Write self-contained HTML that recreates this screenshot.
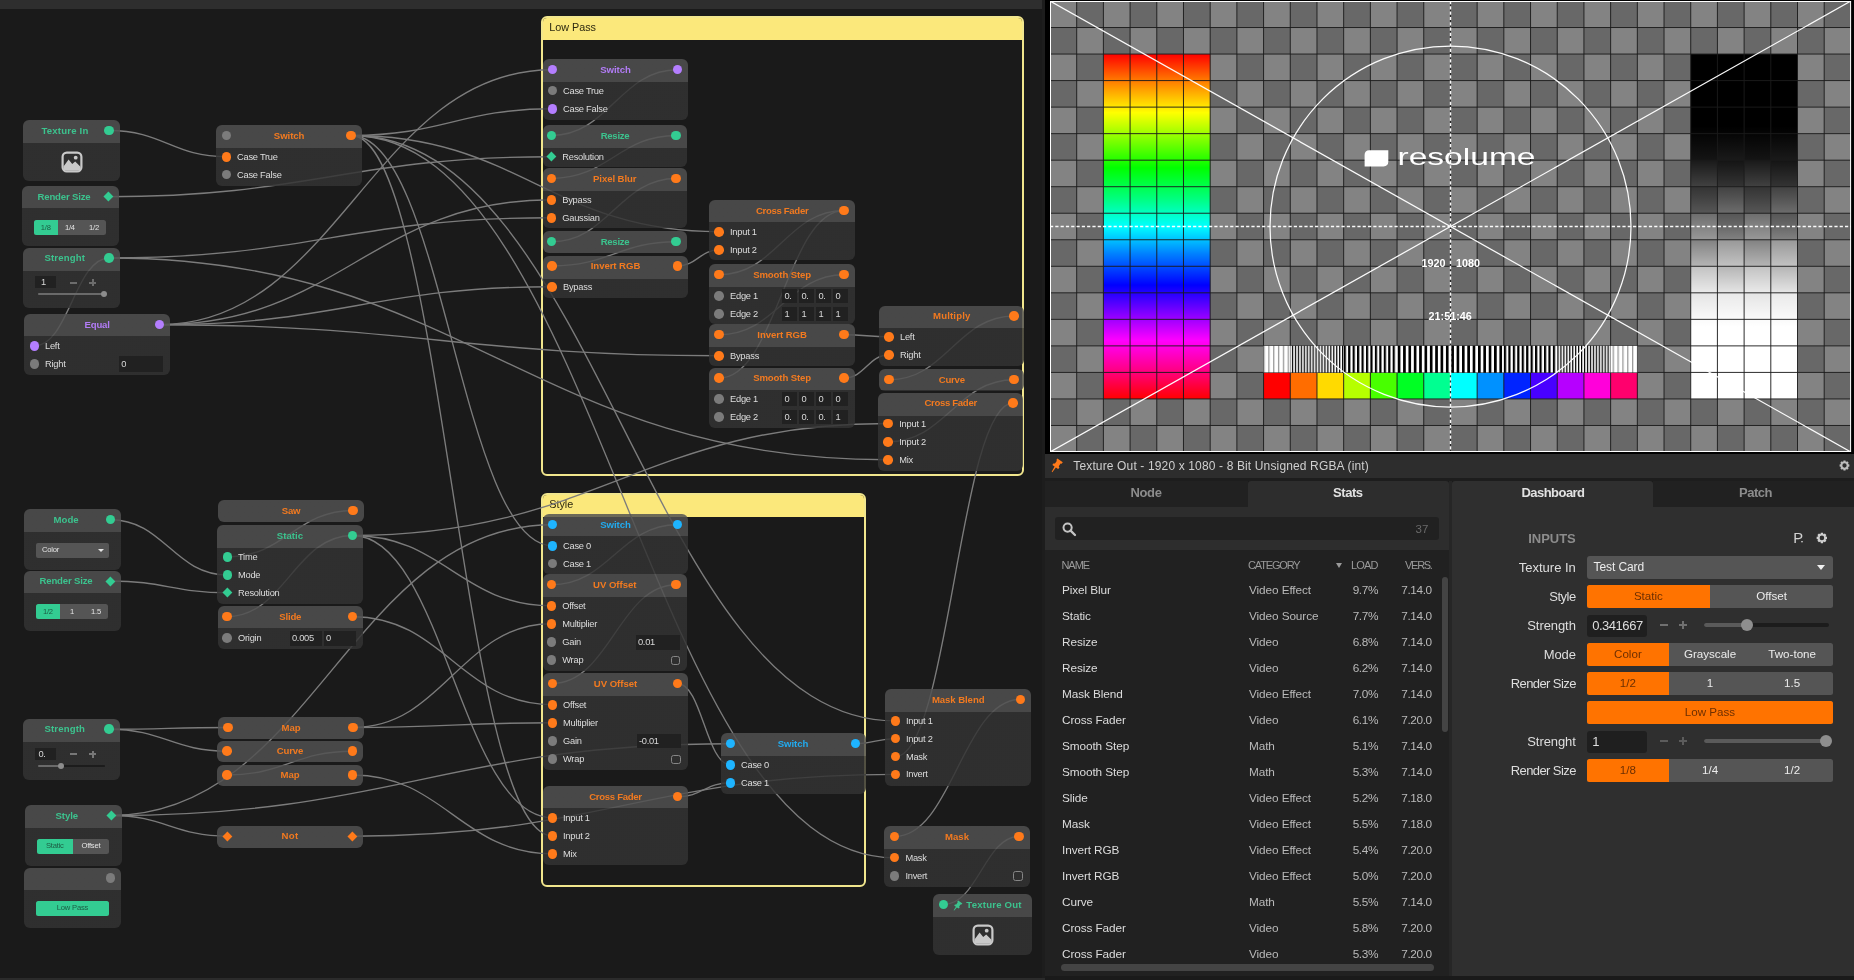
<!DOCTYPE html>
<html lang="en"><head><meta charset="utf-8"><title>Wire patch</title><style>
html,body{margin:0;padding:0}
#app{position:absolute;left:0;top:0;width:1854px;height:980px;overflow:hidden;will-change:transform}
body{width:1854px;height:980px;overflow:hidden;position:relative;background:#1a1a1a;font-family:"Liberation Sans",sans-serif;}
.a,.n,.t,.pt,.dm,.tri,.grp{position:absolute;display:block}
.n{background:linear-gradient(rgba(81,81,81,.84) var(--h),rgba(51,51,51,.84) var(--h));border-radius:6px}
.pt{width:9.6px;height:9.6px;border-radius:50%}
.dm{width:6.8px;height:6.8px;transform:rotate(45deg)}
.t{white-space:nowrap;height:16px;line-height:16px;font-size:9.3px;color:#dcdcdc}
.tc{width:200px;text-align:center}
.tr{width:200px;text-align:right}
.nt{font-weight:bold;font-size:9.6px}
.nl{font-size:9.3px;letter-spacing:-.24px;color:#dedede}
.nv{font-size:9.3px;letter-spacing:-.3px;color:#d8d8d8}
.sg{font-size:7.6px;letter-spacing:-.2px;color:#e4e4e4}
.tri{width:0;height:0;border-style:solid;border-color:#e6e6e6 transparent transparent transparent}
.grp{border:2px solid #f1e68d;border-radius:6px;box-sizing:border-box;overflow:hidden}
.grp b{display:block;background:#fbe87b;font-weight:normal;color:#2c2810;font-size:10.8px;padding-left:6.2px}
.tab{font-weight:bold;font-size:13px}
.hd{font-size:11px;color:#9a9a9a}
.rw{font-size:11.8px;letter-spacing:-.1px}
.rn{letter-spacing:-.38px}
.lb{font-size:13px;color:#dedede}
.ct{font-size:11.6px;color:#ececec}
.pt12{font-size:12px}
</style></head><body><div id="app">
<div class="a" style="left:0px;top:0px;width:1042px;height:9px;background:#2e2e2e;"></div>
<div class="a" style="left:0px;top:978.2px;width:1045px;height:1.8px;background:#2b2b2b;"></div>
<div class="a" style="left:1042px;top:0px;width:3px;height:977.7px;background:#1d1d1d;"></div>
<div class="grp" style="left:541px;top:16px;width:483.2px;height:460px"><b style="height:21.5px;line-height:19px">Low Pass</b></div>
<div class="grp" style="left:541px;top:493px;width:325px;height:394px"><b style="height:22px;line-height:19.5px">Style</b></div>
<svg class="a" style="left:0;top:0" width="1045" height="980" viewBox="0 0 1045 980" fill="none" stroke="#7c7c7c" stroke-width="1.35"><path d="M109.25 130.45C162.6 130.45 173.15 156.75 226.5 156.75"/><path d="M108.25 196.7C309.93 196.7 349.82 156.75 551.5 156.75"/><path d="M109.25 257.95C75.24 257.95 68.51 345.75 34.5 345.75"/><path d="M109.25 257.95C310.47 257.95 350.28 217.75 551.5 217.75"/><path d="M109.25 257.95C463.58 257.95 533.67 459.75 888 459.75"/><path d="M159.5 324.7C338.31 324.7 373.69 69.7 552.5 69.7"/><path d="M159.5 324.7C337.86 324.7 373.14 199.75 551.5 199.75"/><path d="M159.5 324.7C338.2 324.7 373.55 286.75 552.25 286.75"/><path d="M159.5 324.7C414.19 324.7 464.56 355.75 719.25 355.75"/><path d="M351.25 135.45C442.82 135.45 460.93 108.75 552.5 108.75"/><path d="M351.25 135.45C518.69 135.45 551.81 231.75 719.25 231.75"/><path d="M351.25 135.45C598.43 135.45 647.32 857.7 894.5 857.7"/><path d="M351.25 135.45C598.84 135.45 647.81 720.9 895.4 720.9"/><path d="M351.25 135.45C442.82 135.45 460.93 835.75 552.5 835.75"/><path d="M351.25 135.45C442.82 135.45 460.93 545.75 552.5 545.75"/><path d="M110.5 519.7C163.74 519.7 174.26 575 227.5 575"/><path d="M110.5 580.95C163.74 580.95 174.26 592.75 227.5 592.75"/><path d="M353.25 510.45C296.03 510.45 284.72 556.75 227.5 556.75"/><path d="M352.5 535.45C295.4 535.45 284.1 616.7 227 616.7"/><path d="M352.5 535.45C596.15 535.45 644.35 423.5 888 423.5"/><path d="M352.5 535.45C443.05 535.45 460.95 605.75 551.5 605.75"/><path d="M352.5 535.45C443.5 535.45 461.5 817.75 552.5 817.75"/><path d="M352.5 616.7C443.5 616.7 461.5 704.75 552.5 704.75"/><path d="M109.25 729.2C163.28 729.2 173.97 727.45 228 727.45"/><path d="M109.25 729.2C162.83 729.2 173.42 751.2 227 751.2"/><path d="M352.5 751.2C295.4 751.2 284.1 774.95 227 774.95"/><path d="M353.25 727.45C443.45 727.45 461.3 623.75 551.5 623.75"/><path d="M353.25 727.45C443.91 727.45 461.84 722.75 552.5 722.75"/><path d="M352.5 774.95C443.5 774.95 461.5 853.75 552.5 853.75"/><path d="M111.25 815.45C164.14 815.45 174.61 836.2 227.5 836.2"/><path d="M111.25 815.45C312.02 815.45 351.73 524.7 552.5 524.7"/><path d="M111.25 815.45C393.01 815.45 448.74 743.7 730.5 743.7"/><path d="M352.5 836.2C599.52 836.2 648.38 774.4 895.4 774.4"/><path d="M677.5 69.7C620.17 69.7 608.83 135.45 551.5 135.45"/><path d="M676.25 135.45C619.49 135.45 608.26 178.45 551.5 178.45"/><path d="M676.25 178.45C619.49 178.45 608.26 241.7 551.5 241.7"/><path d="M676.25 241.7C619.83 241.7 608.67 265.95 552.25 265.95"/><path d="M677.5 265.95C696.5 265.95 700.25 249.75 719.25 249.75"/><path d="M844.25 210.45C787.38 210.45 776.12 274.7 719.25 274.7"/><path d="M844.25 274.7C787.38 274.7 776.12 334.7 719.25 334.7"/><path d="M844.25 210.45C787.38 210.45 776.12 377.95 719.25 377.95"/><path d="M844.25 334.7C864.73 334.7 868.77 336.75 889.25 336.75"/><path d="M844.25 377.95C864.73 377.95 868.77 354.75 889.25 354.75"/><path d="M1014.25 315.95C957.38 315.95 946.12 379.7 889.25 379.7"/><path d="M1014.25 379.7C956.81 379.7 945.44 441.75 888 441.75"/><path d="M1013.25 402.95C959.63 402.95 949.02 756.6 895.4 756.6"/><path d="M677.5 524.7C620.17 524.7 608.83 584.7 551.5 584.7"/><path d="M676.25 584.7C619.94 584.7 608.81 683.45 552.5 683.45"/><path d="M677.5 683.45C701.62 683.45 706.38 764.75 730.5 764.75"/><path d="M677.5 796.7C701.62 796.7 706.38 782.75 730.5 782.75"/><path d="M855.5 743.7C873.65 743.7 877.25 738.6 895.4 738.6"/><path d="M1020.4 699.45C963.12 699.45 951.78 836.45 894.5 836.45"/><path d="M1019.2 836.45C984.71 836.45 977.89 904.55 943.4 904.55"/></svg>
<div class="n" style="left:23px;top:120px;width:97px;height:61px;--h:23px"></div>
<span class="t tc nt" style="left:-35px;top:122.65px;color:#3cc38e;letter-spacing:0.19px;font-size:9.6px;">Texture In</span>
<i class="pt" style="left:104.45px;top:125.65px;background:#33cc92"></i>
<svg class="a" style="left:60.5px;top:151px" width="22" height="22" viewBox="0 0 22 22"><rect x="1.6" y="1.6" width="18.8" height="18.8" rx="4.2" fill="none" stroke="#c9c9c9" stroke-width="2.2"/><path d="M2.5 15.5 L7.6 8.6 L11.2 13 L14.2 10.6 L19.5 15.8 V17 Q19.5 19.5 17 19.5 H5 Q2.5 19.5 2.5 17 Z" fill="#c9c9c9"/><circle cx="14.7" cy="6.7" r="1.9" fill="#c9c9c9"/></svg>
<div class="n" style="left:22px;top:186.25px;width:97px;height:59.5px;--h:22.5px"></div>
<span class="t tc nt" style="left:-36px;top:188.9px;color:#3cc38e;letter-spacing:-0.18px;font-size:9.6px;">Render Size</span>
<i class="dm" style="left:104.85px;top:193.3px;background:#33cc92"></i>
<div class="a" style="left:33.75px;top:220px;width:72.25px;height:15px;background:#555;border-radius:2.5px;"></div>
<div class="a" style="left:33.75px;top:220px;width:24.08px;height:15px;background:#33cc92;border-radius:2.5px 0 0 2.5px;"></div>
<span class="t tc sg" style="left:-54.21px;top:219.7px;color:#1d5c44;">1/8</span>
<span class="t tc sg" style="left:-30.12px;top:219.7px;">1/4</span>
<span class="t tc sg" style="left:-6.04px;top:219.7px;">1/2</span>
<div class="n" style="left:23px;top:247.5px;width:97px;height:60px;--h:22.5px"></div>
<span class="t tc nt" style="left:-35.25px;top:250.15px;color:#3cc38e;letter-spacing:0.13px;font-size:9.6px;">Strenght</span>
<i class="pt" style="left:104.45px;top:253.15px;background:#33cc92"></i>
<div class="a" style="left:35px;top:276.25px;width:21px;height:11.75px;background:#212121;"></div>
<span class="t nv" style="left:41px;top:274.32px;">1</span>
<div class="a" style="left:69.85px;top:281.5px;width:6.8px;height:2px;background:#6c6c6c;"></div>
<div class="a" style="left:89.1px;top:281.5px;width:6.8px;height:2px;background:#6c6c6c;"></div>
<div class="a" style="left:91.5px;top:279.1px;width:2px;height:6.8px;background:#6c6c6c;"></div>
<div class="a" style="left:37.5px;top:292.95px;width:66.25px;height:1.6px;background:#1c1c1c;border-radius:0.8px;"></div>
<div class="a" style="left:37.5px;top:292.95px;width:66.25px;height:1.6px;background:#6a6a6a;border-radius:0.8px;"></div>
<div class="a" style="left:100.75px;top:290.75px;width:6px;height:6px;background:#8c8c8c;border-radius:50%;"></div>
<div class="n" style="left:24.25px;top:314.25px;width:145.75px;height:60.25px;--h:22.5px"></div>
<span class="t tc nt" style="left:-2.88px;top:316.9px;color:#b27cf6;letter-spacing:-0.17px;font-size:9.6px;">Equal</span>
<i class="pt" style="left:154.7px;top:319.9px;background:#b47eff"></i>
<i class="pt" style="left:29.7px;top:340.95px;background:#b47eff"></i>
<span class="t nl" style="left:45px;top:337.75px;">Left</span>
<i class="pt" style="left:29.7px;top:358.95px;background:#7b7b7b"></i>
<span class="t nl" style="left:45px;top:355.75px;">Right</span>
<div class="a" style="left:118.75px;top:356.25px;width:44.25px;height:15.5px;background:#212121;"></div>
<span class="t nv" style="left:121.25px;top:356.2px;">0</span>
<div class="n" style="left:216.25px;top:125px;width:145.75px;height:61px;--h:22.5px"></div>
<span class="t tc nt" style="left:189.12px;top:127.65px;color:#f27a20;letter-spacing:-0.07px;font-size:9.6px;">Switch</span>
<i class="pt" style="left:221.7px;top:130.65px;background:#7b7b7b"></i>
<i class="pt" style="left:346.45px;top:130.65px;background:#ff7a1a"></i>
<i class="pt" style="left:221.7px;top:151.95px;background:#ff7a1a"></i>
<span class="t nl" style="left:237px;top:148.75px;">Case True</span>
<i class="pt" style="left:221.7px;top:169.7px;background:#7b7b7b"></i>
<span class="t nl" style="left:237px;top:166.5px;">Case False</span>
<div class="n" style="left:24.25px;top:509.25px;width:96.75px;height:60.25px;--h:22.5px"></div>
<span class="t tc nt" style="left:-33.9px;top:511.9px;color:#3cc38e;letter-spacing:0.06px;font-size:9.6px;">Mode</span>
<i class="pt" style="left:105.7px;top:514.9px;background:#33cc92"></i>
<div class="a" style="left:35.75px;top:543px;width:73.5px;height:15px;background:#555;border-radius:2px;"></div>
<span class="t sg" style="left:42px;top:542.2px;">Color</span>
<i class="tri" style="left:97.8px;top:548.9px;border-width:3.6px 3.2px 0 3.2px"></i>
<div class="n" style="left:24.25px;top:570.5px;width:96.75px;height:60px;--h:22px"></div>
<span class="t tc nt" style="left:-34px;top:573.15px;color:#3cc38e;letter-spacing:-0.18px;font-size:9.6px;">Render Size</span>
<i class="dm" style="left:107.1px;top:577.55px;background:#33cc92"></i>
<div class="a" style="left:35.75px;top:604.25px;width:72.25px;height:15px;background:#555;border-radius:2.5px;"></div>
<div class="a" style="left:35.75px;top:604.25px;width:24.25px;height:15px;background:#33cc92;border-radius:2.5px 0 0 2.5px;"></div>
<span class="t tc sg" style="left:-52.12px;top:603.95px;color:#1d5c44;">1/2</span>
<span class="t tc sg" style="left:-28px;top:603.95px;">1</span>
<span class="t tc sg" style="left:-4px;top:603.95px;">1.5</span>
<div class="n" style="left:218px;top:500px;width:146px;height:21.75px;--h:21.75px"></div>
<span class="t tc nt" style="left:191px;top:502.65px;color:#f27a20;letter-spacing:-0.3px;font-size:9.6px;">Saw</span>
<i class="pt" style="left:348.45px;top:505.65px;background:#ff7a1a"></i>
<div class="n" style="left:217px;top:525px;width:146px;height:78.75px;--h:23px"></div>
<span class="t tc nt" style="left:190px;top:527.65px;color:#3cc38e;letter-spacing:0.06px;font-size:9.6px;">Static</span>
<i class="pt" style="left:347.7px;top:530.65px;background:#33cc92"></i>
<i class="pt" style="left:222.7px;top:551.95px;background:#33cc92"></i>
<span class="t nl" style="left:238px;top:548.75px;">Time</span>
<i class="pt" style="left:222.7px;top:570.2px;background:#33cc92"></i>
<span class="t nl" style="left:238px;top:567px;">Mode</span>
<i class="dm" style="left:224.1px;top:589.35px;background:#33cc92"></i>
<span class="t nl" style="left:238px;top:584.75px;">Resolution</span>
<div class="n" style="left:217.5px;top:606.25px;width:145.5px;height:42.5px;--h:22.5px"></div>
<span class="t tc nt" style="left:190.25px;top:608.9px;color:#f27a20;letter-spacing:-0.19px;font-size:9.6px;">Slide</span>
<i class="pt" style="left:222.2px;top:611.9px;background:#ff7a1a"></i>
<i class="pt" style="left:347.7px;top:611.9px;background:#ff7a1a"></i>
<i class="pt" style="left:222.2px;top:632.95px;background:#7b7b7b"></i>
<span class="t nl" style="left:238px;top:629.75px;">Origin</span>
<div class="a" style="left:290px;top:630.75px;width:32px;height:14.75px;background:#212121;"></div>
<span class="t nv" style="left:292px;top:630.33px;">0.005</span>
<div class="a" style="left:324px;top:630.75px;width:32px;height:14.75px;background:#212121;"></div>
<span class="t nv" style="left:326px;top:630.33px;">0</span>
<div class="n" style="left:23px;top:718.75px;width:97px;height:61.25px;--h:22.5px"></div>
<span class="t tc nt" style="left:-35.25px;top:721.4px;color:#3cc38e;letter-spacing:0.13px;font-size:9.6px;">Strength</span>
<i class="pt" style="left:104.45px;top:724.4px;background:#33cc92"></i>
<div class="a" style="left:35px;top:748.25px;width:21px;height:11.75px;background:#212121;"></div>
<span class="t nv" style="left:38.5px;top:746.33px;">0.</span>
<div class="a" style="left:69.65px;top:753.25px;width:7.2px;height:2px;background:#777;"></div>
<div class="a" style="left:88.9px;top:753.25px;width:7.2px;height:2px;background:#777;"></div>
<div class="a" style="left:91.5px;top:750.65px;width:2px;height:7.2px;background:#777;"></div>
<div class="a" style="left:37.5px;top:765.2px;width:67.5px;height:1.6px;background:#1c1c1c;border-radius:0.8px;"></div>
<div class="a" style="left:37.5px;top:765.2px;width:23.5px;height:1.6px;background:#6a6a6a;border-radius:0.8px;"></div>
<div class="a" style="left:58px;top:763px;width:6px;height:6px;background:#8c8c8c;border-radius:50%;"></div>
<div class="n" style="left:218px;top:717px;width:146px;height:21.75px;--h:21.75px"></div>
<span class="t tc nt" style="left:191px;top:719.65px;color:#f27a20;letter-spacing:-0.07px;font-size:9.6px;">Map</span>
<i class="pt" style="left:223.2px;top:722.65px;background:#ff7a1a"></i>
<i class="pt" style="left:348.45px;top:722.65px;background:#ff7a1a"></i>
<div class="n" style="left:217px;top:740.75px;width:146px;height:21px;--h:21px"></div>
<span class="t tc nt" style="left:190px;top:743.4px;color:#f27a20;letter-spacing:-0.18px;font-size:9.6px;">Curve</span>
<i class="pt" style="left:222.2px;top:746.4px;background:#ff7a1a"></i>
<i class="pt" style="left:347.7px;top:746.4px;background:#ff7a1a"></i>
<div class="n" style="left:217px;top:764.5px;width:146px;height:21.25px;--h:21.25px"></div>
<span class="t tc nt" style="left:190px;top:767.15px;color:#f27a20;letter-spacing:-0.07px;font-size:9.6px;">Map</span>
<i class="pt" style="left:222.2px;top:770.15px;background:#ff7a1a"></i>
<i class="pt" style="left:347.7px;top:770.15px;background:#ff7a1a"></i>
<div class="n" style="left:25px;top:805px;width:97px;height:60.5px;--h:22.5px"></div>
<span class="t tc nt" style="left:-33.25px;top:807.65px;color:#3cc38e;letter-spacing:-0.09px;font-size:9.6px;">Style</span>
<i class="dm" style="left:107.85px;top:812.05px;background:#33cc92"></i>
<div class="a" style="left:36.75px;top:838.75px;width:72.25px;height:15px;background:#555;border-radius:2.5px;"></div>
<div class="a" style="left:36.75px;top:838.75px;width:36.12px;height:15px;background:#33cc92;border-radius:2.5px 0 0 2.5px;"></div>
<span class="t tc sg" style="left:-45.19px;top:838.45px;color:#1d5c44;">Static</span>
<span class="t tc sg" style="left:-9.06px;top:838.45px;">Offset</span>
<div class="n" style="left:217px;top:825.75px;width:146px;height:22px;--h:22px"></div>
<span class="t tc nt" style="left:190px;top:828.4px;color:#f27a20;letter-spacing:0.34px;font-size:9.6px;">Not</span>
<i class="dm" style="left:224.1px;top:832.8px;background:#ff7a1a"></i>
<i class="dm" style="left:349.1px;top:832.8px;background:#ff7a1a"></i>
<div class="n" style="left:24.25px;top:867.5px;width:96.75px;height:60px;--h:22.5px"></div>
<i class="pt" style="left:105.7px;top:873.15px;background:#7b7b7b"></i>
<div class="a" style="left:35.75px;top:900.75px;width:73.5px;height:15px;background:#555;border-radius:2.5px;"></div>
<div class="a" style="left:35.75px;top:900.75px;width:73.5px;height:15px;background:#33cc92;border-radius:2.5px;"></div>
<span class="t tc sg" style="left:-27.5px;top:900.45px;color:#1d5c44;">Low Pass</span>
<div class="n" style="left:543px;top:59.25px;width:145px;height:60.75px;--h:22.75px"></div>
<span class="t tc nt" style="left:515.5px;top:61.9px;color:#b27cf6;letter-spacing:-0.07px;font-size:9.6px;">Switch</span>
<i class="pt" style="left:547.7px;top:64.9px;background:#b47eff"></i>
<i class="pt" style="left:672.7px;top:64.9px;background:#b47eff"></i>
<i class="pt" style="left:547.7px;top:85.7px;background:#7b7b7b"></i>
<span class="t nl" style="left:563px;top:82.5px;">Case True</span>
<i class="pt" style="left:547.7px;top:103.95px;background:#b47eff"></i>
<span class="t nl" style="left:563px;top:100.75px;">Case False</span>
<div class="n" style="left:543px;top:125px;width:144px;height:42px;--h:22.75px"></div>
<span class="t tc nt" style="left:515px;top:127.65px;color:#3cc38e;letter-spacing:-0.32px;font-size:9.6px;">Resize</span>
<i class="pt" style="left:546.7px;top:130.65px;background:#33cc92"></i>
<i class="pt" style="left:671.45px;top:130.65px;background:#33cc92"></i>
<i class="dm" style="left:548.1px;top:153.35px;background:#33cc92"></i>
<span class="t nl" style="left:562.25px;top:148.75px;">Resolution</span>
<div class="n" style="left:542.5px;top:168px;width:144.5px;height:60px;--h:22.75px"></div>
<span class="t tc nt" style="left:514.75px;top:170.65px;color:#f27a20;letter-spacing:-0.08px;font-size:9.6px;">Pixel Blur</span>
<i class="pt" style="left:546.7px;top:173.65px;background:#ff7a1a"></i>
<i class="pt" style="left:671.45px;top:173.65px;background:#ff7a1a"></i>
<i class="pt" style="left:546.7px;top:194.95px;background:#ff7a1a"></i>
<span class="t nl" style="left:562.25px;top:191.75px;">Bypass</span>
<i class="pt" style="left:546.7px;top:212.95px;background:#ff7a1a"></i>
<span class="t nl" style="left:562.25px;top:209.75px;">Gaussian</span>
<div class="n" style="left:543px;top:231.25px;width:144px;height:21.75px;--h:21.75px"></div>
<span class="t tc nt" style="left:515px;top:233.9px;color:#3cc38e;letter-spacing:-0.32px;font-size:9.6px;">Resize</span>
<i class="pt" style="left:546.7px;top:236.9px;background:#33cc92"></i>
<i class="pt" style="left:671.45px;top:236.9px;background:#33cc92"></i>
<div class="n" style="left:543px;top:255.5px;width:145px;height:42px;--h:22.5px"></div>
<span class="t tc nt" style="left:515.5px;top:258.15px;color:#f27a20;letter-spacing:-0.06px;font-size:9.6px;">Invert RGB</span>
<i class="pt" style="left:547.45px;top:261.15px;background:#ff7a1a"></i>
<i class="pt" style="left:672.7px;top:261.15px;background:#ff7a1a"></i>
<i class="pt" style="left:547.45px;top:281.95px;background:#ff7a1a"></i>
<span class="t nl" style="left:563px;top:278.75px;">Bypass</span>
<div class="n" style="left:709.25px;top:200px;width:145.75px;height:60px;--h:22.5px"></div>
<span class="t tc nt" style="left:682.12px;top:202.65px;color:#f27a20;letter-spacing:-0.32px;font-size:9.6px;">Cross Fader</span>
<i class="pt" style="left:839.45px;top:205.65px;background:#ff7a1a"></i>
<i class="pt" style="left:714.45px;top:226.95px;background:#ff7a1a"></i>
<span class="t nl" style="left:730px;top:223.75px;">Input 1</span>
<i class="pt" style="left:714.45px;top:244.95px;background:#ff7a1a"></i>
<span class="t nl" style="left:730px;top:241.75px;">Input 2</span>
<div class="n" style="left:709.25px;top:264.25px;width:145.75px;height:59.5px;--h:22.5px"></div>
<span class="t tc nt" style="left:682.12px;top:266.9px;color:#f27a20;letter-spacing:-0.11px;font-size:9.6px;">Smooth Step</span>
<i class="pt" style="left:714.45px;top:269.9px;background:#ff7a1a"></i>
<i class="pt" style="left:839.45px;top:269.9px;background:#ff7a1a"></i>
<i class="pt" style="left:714.45px;top:290.95px;background:#7b7b7b"></i>
<span class="t nl" style="left:730px;top:287.75px;">Edge 1</span>
<i class="pt" style="left:714.45px;top:308.95px;background:#7b7b7b"></i>
<span class="t nl" style="left:730px;top:305.75px;">Edge 2</span>
<div class="a" style="left:782.25px;top:288.75px;width:14.75px;height:14.5px;background:#212121;"></div>
<span class="t nv" style="left:784.5px;top:288.2px;">0.</span>
<div class="a" style="left:799.25px;top:288.75px;width:14.75px;height:14.5px;background:#212121;"></div>
<span class="t nv" style="left:801.5px;top:288.2px;">0.</span>
<div class="a" style="left:816.25px;top:288.75px;width:14.75px;height:14.5px;background:#212121;"></div>
<span class="t nv" style="left:818.5px;top:288.2px;">0.</span>
<div class="a" style="left:833.25px;top:288.75px;width:14.75px;height:14.5px;background:#212121;"></div>
<span class="t nv" style="left:835.5px;top:288.2px;">0</span>
<div class="a" style="left:782.25px;top:306.75px;width:14.75px;height:14.5px;background:#212121;"></div>
<span class="t nv" style="left:784.5px;top:306.2px;">1</span>
<div class="a" style="left:799.25px;top:306.75px;width:14.75px;height:14.5px;background:#212121;"></div>
<span class="t nv" style="left:801.5px;top:306.2px;">1</span>
<div class="a" style="left:816.25px;top:306.75px;width:14.75px;height:14.5px;background:#212121;"></div>
<span class="t nv" style="left:818.5px;top:306.2px;">1</span>
<div class="a" style="left:833.25px;top:306.75px;width:14.75px;height:14.5px;background:#212121;"></div>
<span class="t nv" style="left:835.5px;top:306.2px;">1</span>
<div class="n" style="left:709.25px;top:324.25px;width:145.75px;height:42px;--h:22.75px"></div>
<span class="t tc nt" style="left:682.12px;top:326.9px;color:#f27a20;letter-spacing:-0.06px;font-size:9.6px;">Invert RGB</span>
<i class="pt" style="left:714.45px;top:329.9px;background:#ff7a1a"></i>
<i class="pt" style="left:839.45px;top:329.9px;background:#ff7a1a"></i>
<i class="pt" style="left:714.45px;top:350.95px;background:#ff7a1a"></i>
<span class="t nl" style="left:730px;top:347.75px;">Bypass</span>
<div class="n" style="left:709.25px;top:367.5px;width:145.75px;height:60px;--h:22.5px"></div>
<span class="t tc nt" style="left:682.12px;top:370.15px;color:#f27a20;letter-spacing:-0.11px;font-size:9.6px;">Smooth Step</span>
<i class="pt" style="left:714.45px;top:373.15px;background:#ff7a1a"></i>
<i class="pt" style="left:839.45px;top:373.15px;background:#ff7a1a"></i>
<i class="pt" style="left:714.45px;top:393.95px;background:#7b7b7b"></i>
<span class="t nl" style="left:730px;top:390.75px;">Edge 1</span>
<i class="pt" style="left:714.45px;top:411.95px;background:#7b7b7b"></i>
<span class="t nl" style="left:730px;top:408.75px;">Edge 2</span>
<div class="a" style="left:782.25px;top:391.75px;width:14.75px;height:14.5px;background:#212121;"></div>
<span class="t nv" style="left:784.5px;top:391.2px;">0</span>
<div class="a" style="left:799.25px;top:391.75px;width:14.75px;height:14.5px;background:#212121;"></div>
<span class="t nv" style="left:801.5px;top:391.2px;">0</span>
<div class="a" style="left:816.25px;top:391.75px;width:14.75px;height:14.5px;background:#212121;"></div>
<span class="t nv" style="left:818.5px;top:391.2px;">0</span>
<div class="a" style="left:833.25px;top:391.75px;width:14.75px;height:14.5px;background:#212121;"></div>
<span class="t nv" style="left:835.5px;top:391.2px;">0</span>
<div class="a" style="left:782.25px;top:409.75px;width:14.75px;height:14.5px;background:#212121;"></div>
<span class="t nv" style="left:784.5px;top:409.2px;">0.</span>
<div class="a" style="left:799.25px;top:409.75px;width:14.75px;height:14.5px;background:#212121;"></div>
<span class="t nv" style="left:801.5px;top:409.2px;">0.</span>
<div class="a" style="left:816.25px;top:409.75px;width:14.75px;height:14.5px;background:#212121;"></div>
<span class="t nv" style="left:818.5px;top:409.2px;">0.</span>
<div class="a" style="left:833.25px;top:409.75px;width:14.75px;height:14.5px;background:#212121;"></div>
<span class="t nv" style="left:835.5px;top:409.2px;">1</span>
<div class="n" style="left:879.25px;top:305.5px;width:145px;height:60.75px;--h:22px"></div>
<span class="t tc nt" style="left:851.75px;top:308.15px;color:#f27a20;letter-spacing:0.15px;font-size:9.6px;">Multiply</span>
<i class="pt" style="left:1009.45px;top:311.15px;background:#ff7a1a"></i>
<i class="pt" style="left:884.45px;top:331.95px;background:#ff7a1a"></i>
<span class="t nl" style="left:900px;top:328.75px;">Left</span>
<i class="pt" style="left:884.45px;top:349.95px;background:#ff7a1a"></i>
<span class="t nl" style="left:900px;top:346.75px;">Right</span>
<div class="n" style="left:879.25px;top:369.25px;width:145px;height:21.5px;--h:21.5px"></div>
<span class="t tc nt" style="left:851.75px;top:371.9px;color:#f27a20;letter-spacing:-0.24px;font-size:9.6px;">Curve</span>
<i class="pt" style="left:884.45px;top:374.9px;background:#ff7a1a"></i>
<i class="pt" style="left:1009.45px;top:374.9px;background:#ff7a1a"></i>
<div class="n" style="left:878px;top:392.5px;width:145.25px;height:78px;--h:22.5px"></div>
<span class="t tc nt" style="left:850.62px;top:395.15px;color:#f27a20;letter-spacing:-0.32px;font-size:9.6px;">Cross Fader</span>
<i class="pt" style="left:1008.45px;top:398.15px;background:#ff7a1a"></i>
<i class="pt" style="left:883.2px;top:418.7px;background:#ff7a1a"></i>
<span class="t nl" style="left:899.25px;top:415.5px;">Input 1</span>
<i class="pt" style="left:883.2px;top:436.95px;background:#ff7a1a"></i>
<span class="t nl" style="left:899.25px;top:433.75px;">Input 2</span>
<i class="pt" style="left:883.2px;top:454.95px;background:#ff7a1a"></i>
<span class="t nl" style="left:899.25px;top:451.75px;">Mix</span>
<div class="n" style="left:543px;top:514.25px;width:145px;height:59.5px;--h:22.5px"></div>
<span class="t tc nt" style="left:515.5px;top:516.9px;color:#22abef;letter-spacing:-0.07px;font-size:9.6px;">Switch</span>
<i class="pt" style="left:547.7px;top:519.9px;background:#1eb4ff"></i>
<i class="pt" style="left:672.7px;top:519.9px;background:#1eb4ff"></i>
<i class="pt" style="left:547.7px;top:540.95px;background:#1eb4ff"></i>
<span class="t nl" style="left:563px;top:537.75px;">Case 0</span>
<i class="pt" style="left:547.7px;top:558.7px;background:#7b7b7b"></i>
<span class="t nl" style="left:563px;top:555.5px;">Case 1</span>
<div class="n" style="left:542.5px;top:574.25px;width:144.5px;height:96.5px;--h:22.5px"></div>
<span class="t tc nt" style="left:514.75px;top:576.9px;color:#f27a20;letter-spacing:-0.03px;font-size:9.6px;">UV Offset</span>
<i class="pt" style="left:546.7px;top:579.9px;background:#ff7a1a"></i>
<i class="pt" style="left:671.45px;top:579.9px;background:#ff7a1a"></i>
<i class="pt" style="left:546.7px;top:600.95px;background:#ff7a1a"></i>
<span class="t nl" style="left:562.25px;top:597.75px;">Offset</span>
<i class="pt" style="left:546.7px;top:618.95px;background:#ff7a1a"></i>
<span class="t nl" style="left:562.25px;top:615.75px;">Multiplier</span>
<i class="pt" style="left:546.7px;top:636.95px;background:#7b7b7b"></i>
<span class="t nl" style="left:562.25px;top:633.75px;">Gain</span>
<i class="pt" style="left:546.7px;top:654.95px;background:#7b7b7b"></i>
<span class="t nl" style="left:562.25px;top:651.75px;">Wrap</span>
<div class="a" style="left:635.5px;top:635px;width:44.5px;height:14.5px;background:#212121;"></div>
<span class="t nv" style="left:638px;top:634.45px;">0.01</span>
<div class="a" style="left:670.5px;top:655.5px;width:9.5px;height:9.5px;border:1px solid #868686;border-radius:2.5px;box-sizing:border-box;"></div>
<div class="n" style="left:543px;top:673px;width:145px;height:96.5px;--h:22.75px"></div>
<span class="t tc nt" style="left:515.5px;top:675.65px;color:#f27a20;letter-spacing:-0.03px;font-size:9.6px;">UV Offset</span>
<i class="pt" style="left:547.7px;top:678.65px;background:#ff7a1a"></i>
<i class="pt" style="left:672.7px;top:678.65px;background:#ff7a1a"></i>
<i class="pt" style="left:547.7px;top:699.95px;background:#ff7a1a"></i>
<span class="t nl" style="left:563px;top:696.75px;">Offset</span>
<i class="pt" style="left:547.7px;top:717.95px;background:#ff7a1a"></i>
<span class="t nl" style="left:563px;top:714.75px;">Multiplier</span>
<i class="pt" style="left:547.7px;top:735.95px;background:#7b7b7b"></i>
<span class="t nl" style="left:563px;top:732.75px;">Gain</span>
<i class="pt" style="left:547.7px;top:753.95px;background:#7b7b7b"></i>
<span class="t nl" style="left:563px;top:750.75px;">Wrap</span>
<div class="a" style="left:637.25px;top:733.75px;width:43.75px;height:14.5px;background:#212121;"></div>
<span class="t nv" style="left:639px;top:733.2px;">-0.01</span>
<div class="a" style="left:671px;top:754.5px;width:9.5px;height:9.5px;border:1px solid #868686;border-radius:2.5px;box-sizing:border-box;"></div>
<div class="n" style="left:543px;top:786.25px;width:145px;height:78.75px;--h:22.5px"></div>
<span class="t tc nt" style="left:515.5px;top:788.9px;color:#f27a20;letter-spacing:-0.32px;font-size:9.6px;">Cross Fader</span>
<i class="pt" style="left:672.7px;top:791.9px;background:#ff7a1a"></i>
<i class="pt" style="left:547.7px;top:812.95px;background:#ff7a1a"></i>
<span class="t nl" style="left:563px;top:809.75px;">Input 1</span>
<i class="pt" style="left:547.7px;top:830.95px;background:#ff7a1a"></i>
<span class="t nl" style="left:563px;top:827.75px;">Input 2</span>
<i class="pt" style="left:547.7px;top:848.95px;background:#ff7a1a"></i>
<span class="t nl" style="left:563px;top:845.75px;">Mix</span>
<div class="n" style="left:720.5px;top:733.25px;width:145px;height:60.5px;--h:22.5px"></div>
<span class="t tc nt" style="left:693px;top:735.9px;color:#22abef;letter-spacing:-0.07px;font-size:9.6px;">Switch</span>
<i class="pt" style="left:725.7px;top:738.9px;background:#1eb4ff"></i>
<i class="pt" style="left:850.7px;top:738.9px;background:#1eb4ff"></i>
<i class="pt" style="left:725.7px;top:759.95px;background:#1eb4ff"></i>
<span class="t nl" style="left:741px;top:756.75px;">Case 0</span>
<i class="pt" style="left:725.7px;top:777.95px;background:#1eb4ff"></i>
<span class="t nl" style="left:741px;top:774.75px;">Case 1</span>
<div class="n" style="left:885.2px;top:689px;width:146px;height:97px;--h:22.7px"></div>
<span class="t tc nt" style="left:858.2px;top:691.65px;color:#f27a20;letter-spacing:-0.08px;font-size:9.6px;">Mask Blend</span>
<i class="pt" style="left:1015.6px;top:694.65px;background:#ff7a1a"></i>
<i class="pt" style="left:890.6px;top:716.1px;background:#ff7a1a"></i>
<span class="t nl" style="left:905.9px;top:712.9px;">Input 1</span>
<i class="pt" style="left:890.6px;top:733.8px;background:#ff7a1a"></i>
<span class="t nl" style="left:905.9px;top:730.6px;">Input 2</span>
<i class="pt" style="left:890.6px;top:751.8px;background:#ff7a1a"></i>
<span class="t nl" style="left:905.9px;top:748.6px;">Mask</span>
<i class="pt" style="left:890.6px;top:769.6px;background:#ff7a1a"></i>
<span class="t nl" style="left:905.9px;top:766.4px;">Invert</span>
<div class="n" style="left:884px;top:826px;width:146px;height:60.8px;--h:23px"></div>
<span class="t tc nt" style="left:857px;top:828.65px;color:#f27a20;letter-spacing:-0px;font-size:9.6px;">Mask</span>
<i class="pt" style="left:889.7px;top:831.65px;background:#ff7a1a"></i>
<i class="pt" style="left:1014.4px;top:831.65px;background:#ff7a1a"></i>
<i class="pt" style="left:889.7px;top:852.9px;background:#ff7a1a"></i>
<span class="t nl" style="left:905.4px;top:849.7px;">Mask</span>
<i class="pt" style="left:889.7px;top:871.1px;background:#7b7b7b"></i>
<span class="t nl" style="left:905.4px;top:867.9px;">Invert</span>
<div class="a" style="left:1013.2px;top:871.2px;width:9.6px;height:9.6px;border:1px solid #868686;border-radius:2.5px;box-sizing:border-box;"></div>
<div class="n" style="left:933.2px;top:894.1px;width:98.8px;height:60.7px;--h:22.6px"></div>
<span class="t tc nt" style="left:894px;top:896.75px;color:#3cc38e;letter-spacing:0.21px;font-size:9.6px;">Texture Out</span>
<i class="pt" style="left:938.6px;top:899.75px;background:#33cc92"></i>
<svg class="a" style="left:952.5px;top:899.5px" width="10" height="11" viewBox="0 0 10 11"><path d="M5.2 0.6 L9.4 3.4 L8.4 4.6 L7.6 4.4 L6.2 6.6 L6.6 7.8 L5.6 8.6 L3.9 7.4 L1.2 10.6 L0.6 10.2 L2.9 6.7 L1.2 5.5 L1.9 4.4 L3.2 4.4 L4.7 2.2 L4.3 1.6 Z" fill="#3cc38e"/></svg>
<svg class="a" style="left:971.7px;top:924.3px" width="22" height="22" viewBox="0 0 22 22"><rect x="1.6" y="1.6" width="18.8" height="18.8" rx="4.2" fill="none" stroke="#c9c9c9" stroke-width="2.2"/><path d="M2.5 15.5 L7.6 8.6 L11.2 13 L14.2 10.6 L19.5 15.8 V17 Q19.5 19.5 17 19.5 H5 Q2.5 19.5 2.5 17 Z" fill="#c9c9c9"/><circle cx="14.7" cy="6.7" r="1.9" fill="#c9c9c9"/></svg>
<div class="a" style="left:1045px;top:0px;width:809px;height:453.5px;background:#000;"></div>
<svg class="a" style="left:1050px;top:1px" width="802" height="451" viewBox="0 0 802 451"><defs><pattern id="ck" width="53.39" height="53.06" patternUnits="userSpaceOnUse"><rect width="53.39" height="53.06" fill="#686868"/><rect width="26.7" height="26.53" fill="#838383"/><rect x="26.7" y="26.53" width="26.7" height="26.53" fill="#838383"/></pattern><linearGradient id="rb" x1="0" y1="0" x2="0" y2="1"><stop offset="0" stop-color="hsl(0,100%,50%)"/><stop offset="0.08" stop-color="hsl(30,100%,50%)"/><stop offset="0.17" stop-color="hsl(60,100%,50%)"/><stop offset="0.25" stop-color="hsl(90,100%,50%)"/><stop offset="0.33" stop-color="hsl(120,100%,50%)"/><stop offset="0.42" stop-color="hsl(150,100%,50%)"/><stop offset="0.5" stop-color="hsl(180,100%,50%)"/><stop offset="0.58" stop-color="hsl(210,100%,50%)"/><stop offset="0.67" stop-color="hsl(240,100%,50%)"/><stop offset="0.75" stop-color="hsl(270,100%,50%)"/><stop offset="0.83" stop-color="hsl(300,100%,50%)"/><stop offset="0.92" stop-color="hsl(330,100%,50%)"/><stop offset="1" stop-color="hsl(360,100%,50%)"/></linearGradient><linearGradient id="bw" x1="0" y1="0" x2="0" y2="1"><stop offset="0" stop-color="#000"/><stop offset="0.21" stop-color="#000"/><stop offset="0.31" stop-color="#000" stop-opacity="0.8"/><stop offset="0.41" stop-color="#000" stop-opacity="0.4"/><stop offset="0.5" stop-color="#000" stop-opacity="0"/><stop offset="0.5" stop-color="#fff" stop-opacity="0"/><stop offset="0.59" stop-color="#fff" stop-opacity="0.4"/><stop offset="0.69" stop-color="#fff" stop-opacity="0.82"/><stop offset="0.79" stop-color="#fff"/><stop offset="1" stop-color="#fff"/></linearGradient><pattern id="s1" width="4.85" height="4" patternUnits="userSpaceOnUse"><rect width="4.85" height="4" fill="#fff"/><rect width="1.3" height="4" fill="#9a9a9a"/></pattern><pattern id="s2" width="2.95" height="4" patternUnits="userSpaceOnUse"><rect width="2.95" height="4" fill="#fff"/><rect width="1.25" height="4" fill="#000"/></pattern><pattern id="s3" width="4.45" height="4" patternUnits="userSpaceOnUse"><rect width="4.45" height="4" fill="#fff"/><rect width="2.2" height="4" fill="#000"/></pattern><pattern id="s4" width="5.35" height="4" patternUnits="userSpaceOnUse"><rect width="5.35" height="4" fill="#fff"/><rect width="2.65" height="4" fill="#000"/></pattern></defs><rect width="800.9" height="451" fill="url(#ck)"/><rect x="53.39" y="53.06" width="106.79" height="344.88" fill="url(#rb)"/><rect x="640.72" y="53.06" width="106.79" height="344.88" fill="url(#bw)"/><rect x="213.57" y="371.41" width="27" height="26.53" fill="#ff0000"/><rect x="240.27" y="371.41" width="27" height="26.53" fill="#ff6d00"/><rect x="266.97" y="371.41" width="27" height="26.53" fill="#ffda00"/><rect x="293.66" y="371.41" width="27" height="26.53" fill="#b6ff00"/><rect x="320.36" y="371.41" width="27" height="26.53" fill="#48ff00"/><rect x="347.06" y="371.41" width="27" height="26.53" fill="#00ff24"/><rect x="373.75" y="371.41" width="27" height="26.53" fill="#00ff91"/><rect x="400.45" y="371.41" width="27" height="26.53" fill="#00ffff"/><rect x="427.15" y="371.41" width="27" height="26.53" fill="#0091ff"/><rect x="453.84" y="371.41" width="27" height="26.53" fill="#0024ff"/><rect x="480.54" y="371.41" width="27" height="26.53" fill="#4800ff"/><rect x="507.24" y="371.41" width="27" height="26.53" fill="#b600ff"/><rect x="533.93" y="371.41" width="27" height="26.53" fill="#ff00da"/><rect x="560.63" y="371.41" width="27" height="26.53" fill="#ff006d"/><path d="M26.7 0V451M53.39 0V451M80.09 0V451M106.79 0V451M133.48 0V451M160.18 0V451M186.88 0V451M213.57 0V451M240.27 0V451M266.97 0V451M293.66 0V451M320.36 0V451M347.06 0V451M373.75 0V451M400.45 0V451M427.15 0V451M453.84 0V451M480.54 0V451M507.24 0V451M533.93 0V451M560.63 0V451M587.33 0V451M614.02 0V451M640.72 0V451M667.42 0V451M694.11 0V451M720.81 0V451M747.51 0V451M774.2 0V451M0 26.53H800.9M0 53.06H800.9M0 79.59H800.9M0 106.12H800.9M0 132.65H800.9M0 159.18H800.9M0 185.71H800.9M0 212.24H800.9M0 238.76H800.9M0 265.29H800.9M0 291.82H800.9M0 318.35H800.9M0 344.88H800.9M0 371.41H800.9M0 397.94H800.9M0 424.47H800.9" stroke="#1b1b1b" stroke-width="1" fill="none" opacity="0.92"/><rect x="213.57" y="344.88" width="26.7" height="26.53" fill="url(#s1)"/><rect x="240.27" y="344.88" width="53.39" height="26.53" fill="url(#s2)"/><rect x="293.66" y="344.88" width="53.39" height="26.53" fill="url(#s3)"/><rect x="347.06" y="344.88" width="106.79" height="26.53" fill="url(#s4)"/><rect x="453.84" y="344.88" width="53.39" height="26.53" fill="url(#s3)"/><rect x="507.24" y="344.88" width="53.39" height="26.53" fill="url(#s2)"/><rect x="560.63" y="344.88" width="26.7" height="26.53" fill="url(#s1)"/><g stroke="#fff" fill="none" stroke-width="1.25" opacity="0.97"><path d="M0 0L800.9 451M0 451L800.9 0"/><circle cx="400.5" cy="225.5" r="180.5"/><path d="M0 225.5H801M400.5 0V451" stroke-dasharray="3.2 2.1" stroke-width="1.45"/></g><rect x="0.5" y="0.5" width="800.1" height="450" fill="none" stroke="#fff" stroke-width="1"/><path d="M319.4 149.2H338.3V160.6Q338.3 165.4 333.5 165.4H314.6V154Q314.6 149.2 319.4 149.2Z" fill="#fff"/><text x="347.5" y="164.2" font-family="'Liberation Sans',sans-serif" font-size="24" fill="#fff" textLength="138" lengthAdjust="spacingAndGlyphs">resolume</text><g font-family="'Liberation Sans',sans-serif" font-weight="bold" font-size="10.8" fill="#fff"><text x="371.4" y="265.5">1920</text><text x="406" y="265.5">1080</text><text x="378.6" y="319.2">21:51:46</text></g></svg>
<div class="a" style="left:1045px;top:453.5px;width:809px;height:24px;background:#2d2d2d;"></div>
<svg class="a" style="left:1051px;top:457.5px" width="13" height="15" viewBox="0 0 13 15"><path d="M6.4 0.6 L11.8 4.2 L10.6 5.8 L9.6 5.5 L7.8 8.3 L8.4 9.8 L7.1 10.9 L4.9 9.4 L1.3 14.2 L0.7 13.8 L3.6 8.5 L1.4 7 L2.3 5.6 L4 5.6 L5.9 2.8 L5.3 2 Z" fill="#ff7a1a"/></svg>
<span class="t pt12" style="left:1073.3px;top:457.7px;color:#cfcfcf;letter-spacing:0.14px;font-size:12px;">Texture Out - 1920 x 1080 - 8 Bit Unsigned RGBA (int)</span>
<svg class="a" style="left:1838.5px;top:460.1px" width="11" height="11" viewBox="0 0 11 11"><path fill-rule="evenodd" d="M10.4 4.51L10.4 6.49L8.92 6.91L8.91 6.93L9.67 8.26L8.26 9.67L6.93 8.91L6.91 8.92L6.49 10.4L4.51 10.4L4.09 8.92L4.07 8.91L2.74 9.67L1.33 8.26L2.09 6.93L2.08 6.91L0.6 6.49L0.6 4.51L2.08 4.09L2.09 4.07L1.33 2.74L2.74 1.33L4.07 2.09L4.09 2.08L4.51 0.6L6.49 0.6L6.91 2.08L6.93 2.09L8.26 1.33L9.67 2.74L8.91 4.07L8.92 4.09ZM5.5 3.35A2.15 2.15 0 1 0 5.5 7.65A2.15 2.15 0 1 0 5.5 3.35Z" fill="#bdbdbd"/></svg>
<div class="a" style="left:1045px;top:477.5px;width:809px;height:3.25px;background:#1d1d1d;"></div>
<div class="a" style="left:1045px;top:480.75px;width:202.8px;height:25.75px;background:#212121;"></div>
<div class="a" style="left:1247.8px;top:480.75px;width:201.4px;height:25.75px;background:#2d2d2d;border-radius:3px 3px 0 0;"></div>
<span class="t tc tab" style="left:1046px;top:484.9px;color:#8c8c8c;letter-spacing:-0.38px;font-size:13px;">Node</span>
<span class="t tc tab" style="left:1247.8px;top:484.9px;color:#e2e2e2;letter-spacing:-0.46px;font-size:13px;">Stats</span>
<div class="a" style="left:1045px;top:506.5px;width:404.2px;height:43.25px;background:#2d2d2d;"></div>
<div class="a" style="left:1054.6px;top:517px;width:384.1px;height:23px;background:#212121;border-radius:3px;"></div>
<svg class="a" style="left:1061.5px;top:522px" width="15" height="15" viewBox="0 0 15 15"><circle cx="5.6" cy="5.6" r="4.1" fill="none" stroke="#c4c4c4" stroke-width="2"/><path d="M8.6 8.6L13 13" stroke="#c4c4c4" stroke-width="2.3" stroke-linecap="round"/></svg>
<span class="t tr pt12" style="left:1228.3px;top:521.2px;color:#6a6a6a;font-size:11.5px;">37</span>
<div class="a" style="left:1045px;top:549.75px;width:404.2px;height:425.85px;background:#212121;"></div>
<span class="t hd" style="left:1061.5px;top:557.4px;letter-spacing:-1.07px;font-size:11px;">NAME</span>
<span class="t hd" style="left:1248px;top:557.4px;letter-spacing:-1.15px;font-size:11px;">CATEGORY</span>
<i class="tri" style="left:1335.6px;top:563px;border-width:5px 3.6px 0 3.6px;border-top-color:#9a9a9a"></i>
<span class="t tr hd" style="left:1177.6px;top:557.4px;letter-spacing:-0.86px;font-size:11px;">LOAD</span>
<span class="t tr hd" style="left:1231.6px;top:557.4px;letter-spacing:-1.3px;font-size:11px;">VERS.</span>
<span class="t rw" style="left:1062px;top:582.2px;color:#dcdcdc;">Pixel Blur</span>
<span class="t rw" style="left:1249px;top:582.2px;color:#b9b9b9;">Video Effect</span>
<span class="t tr rw rn" style="left:1178px;top:582.2px;color:#b9b9b9;">9.7%</span>
<span class="t tr rw rn" style="left:1231.8px;top:582.2px;color:#b9b9b9;">7.14.0</span>
<span class="t rw" style="left:1062px;top:608.2px;color:#dcdcdc;">Static</span>
<span class="t rw" style="left:1249px;top:608.2px;color:#b9b9b9;">Video Source</span>
<span class="t tr rw rn" style="left:1178px;top:608.2px;color:#b9b9b9;">7.7%</span>
<span class="t tr rw rn" style="left:1231.8px;top:608.2px;color:#b9b9b9;">7.14.0</span>
<span class="t rw" style="left:1062px;top:634.2px;color:#dcdcdc;">Resize</span>
<span class="t rw" style="left:1249px;top:634.2px;color:#b9b9b9;">Video</span>
<span class="t tr rw rn" style="left:1178px;top:634.2px;color:#b9b9b9;">6.8%</span>
<span class="t tr rw rn" style="left:1231.8px;top:634.2px;color:#b9b9b9;">7.14.0</span>
<span class="t rw" style="left:1062px;top:660.2px;color:#dcdcdc;">Resize</span>
<span class="t rw" style="left:1249px;top:660.2px;color:#b9b9b9;">Video</span>
<span class="t tr rw rn" style="left:1178px;top:660.2px;color:#b9b9b9;">6.2%</span>
<span class="t tr rw rn" style="left:1231.8px;top:660.2px;color:#b9b9b9;">7.14.0</span>
<span class="t rw" style="left:1062px;top:686.2px;color:#dcdcdc;">Mask Blend</span>
<span class="t rw" style="left:1249px;top:686.2px;color:#b9b9b9;">Video Effect</span>
<span class="t tr rw rn" style="left:1178px;top:686.2px;color:#b9b9b9;">7.0%</span>
<span class="t tr rw rn" style="left:1231.8px;top:686.2px;color:#b9b9b9;">7.14.0</span>
<span class="t rw" style="left:1062px;top:712.2px;color:#dcdcdc;">Cross Fader</span>
<span class="t rw" style="left:1249px;top:712.2px;color:#b9b9b9;">Video</span>
<span class="t tr rw rn" style="left:1178px;top:712.2px;color:#b9b9b9;">6.1%</span>
<span class="t tr rw rn" style="left:1231.8px;top:712.2px;color:#b9b9b9;">7.20.0</span>
<span class="t rw" style="left:1062px;top:738.2px;color:#dcdcdc;">Smooth Step</span>
<span class="t rw" style="left:1249px;top:738.2px;color:#b9b9b9;">Math</span>
<span class="t tr rw rn" style="left:1178px;top:738.2px;color:#b9b9b9;">5.1%</span>
<span class="t tr rw rn" style="left:1231.8px;top:738.2px;color:#b9b9b9;">7.14.0</span>
<span class="t rw" style="left:1062px;top:764.2px;color:#dcdcdc;">Smooth Step</span>
<span class="t rw" style="left:1249px;top:764.2px;color:#b9b9b9;">Math</span>
<span class="t tr rw rn" style="left:1178px;top:764.2px;color:#b9b9b9;">5.3%</span>
<span class="t tr rw rn" style="left:1231.8px;top:764.2px;color:#b9b9b9;">7.14.0</span>
<span class="t rw" style="left:1062px;top:790.2px;color:#dcdcdc;">Slide</span>
<span class="t rw" style="left:1249px;top:790.2px;color:#b9b9b9;">Video Effect</span>
<span class="t tr rw rn" style="left:1178px;top:790.2px;color:#b9b9b9;">5.2%</span>
<span class="t tr rw rn" style="left:1231.8px;top:790.2px;color:#b9b9b9;">7.18.0</span>
<span class="t rw" style="left:1062px;top:816.2px;color:#dcdcdc;">Mask</span>
<span class="t rw" style="left:1249px;top:816.2px;color:#b9b9b9;">Video Effect</span>
<span class="t tr rw rn" style="left:1178px;top:816.2px;color:#b9b9b9;">5.5%</span>
<span class="t tr rw rn" style="left:1231.8px;top:816.2px;color:#b9b9b9;">7.18.0</span>
<span class="t rw" style="left:1062px;top:842.2px;color:#dcdcdc;">Invert RGB</span>
<span class="t rw" style="left:1249px;top:842.2px;color:#b9b9b9;">Video Effect</span>
<span class="t tr rw rn" style="left:1178px;top:842.2px;color:#b9b9b9;">5.4%</span>
<span class="t tr rw rn" style="left:1231.8px;top:842.2px;color:#b9b9b9;">7.20.0</span>
<span class="t rw" style="left:1062px;top:868.2px;color:#dcdcdc;">Invert RGB</span>
<span class="t rw" style="left:1249px;top:868.2px;color:#b9b9b9;">Video Effect</span>
<span class="t tr rw rn" style="left:1178px;top:868.2px;color:#b9b9b9;">5.0%</span>
<span class="t tr rw rn" style="left:1231.8px;top:868.2px;color:#b9b9b9;">7.20.0</span>
<span class="t rw" style="left:1062px;top:894.2px;color:#dcdcdc;">Curve</span>
<span class="t rw" style="left:1249px;top:894.2px;color:#b9b9b9;">Math</span>
<span class="t tr rw rn" style="left:1178px;top:894.2px;color:#b9b9b9;">5.5%</span>
<span class="t tr rw rn" style="left:1231.8px;top:894.2px;color:#b9b9b9;">7.14.0</span>
<span class="t rw" style="left:1062px;top:920.2px;color:#dcdcdc;">Cross Fader</span>
<span class="t rw" style="left:1249px;top:920.2px;color:#b9b9b9;">Video</span>
<span class="t tr rw rn" style="left:1178px;top:920.2px;color:#b9b9b9;">5.8%</span>
<span class="t tr rw rn" style="left:1231.8px;top:920.2px;color:#b9b9b9;">7.20.0</span>
<span class="t rw" style="left:1062px;top:946.2px;color:#dcdcdc;">Cross Fader</span>
<span class="t rw" style="left:1249px;top:946.2px;color:#b9b9b9;">Video</span>
<span class="t tr rw rn" style="left:1178px;top:946.2px;color:#b9b9b9;">5.3%</span>
<span class="t tr rw rn" style="left:1231.8px;top:946.2px;color:#b9b9b9;">7.20.0</span>
<div class="a" style="left:1441.8px;top:577px;width:6.2px;height:155px;background:#444;border-radius:3px;"></div>
<div class="a" style="left:1061.4px;top:964.3px;width:372.3px;height:7.1px;background:#444;border-radius:3.5px;"></div>
<div class="a" style="left:1449.2px;top:480.75px;width:3.1px;height:494.85px;background:#262626;"></div>
<div class="a" style="left:1452.3px;top:480.75px;width:201.1px;height:25.75px;background:#2f2f2f;border-radius:3px 3px 0 0;"></div>
<div class="a" style="left:1653.4px;top:480.75px;width:200.6px;height:25.75px;background:#212121;"></div>
<div class="a" style="left:1452.3px;top:506.5px;width:401.7px;height:469.1px;background:#2f2f2f;"></div>
<span class="t tc tab" style="left:1453px;top:484.9px;color:#e2e2e2;letter-spacing:-0.54px;font-size:13px;">Dashboard</span>
<span class="t tc tab" style="left:1655.5px;top:484.9px;color:#8c8c8c;letter-spacing:-0.48px;font-size:13px;">Patch</span>
<span class="t tr tab" style="left:1375.8px;top:530.9px;color:#8c8c8c;letter-spacing:-0.01px;font-size:13px;">INPUTS</span>
<span class="t lb" style="left:1793.3px;top:529.9px;color:#d2d2d2;font-size:14.8px;">P</span>
<i class="tri" style="left:1800.6px;top:541.2px;border-width:2.8px 1.5px 0 1.5px;border-top-color:#d2d2d2"></i>
<svg class="a" style="left:1815.5px;top:532.2px" width="11.8" height="11.8" viewBox="0 0 11 11"><path fill-rule="evenodd" d="M10.4 4.51L10.4 6.49L8.92 6.91L8.91 6.93L9.67 8.26L8.26 9.67L6.93 8.91L6.91 8.92L6.49 10.4L4.51 10.4L4.09 8.92L4.07 8.91L2.74 9.67L1.33 8.26L2.09 6.93L2.08 6.91L0.6 6.49L0.6 4.51L2.08 4.09L2.09 4.07L1.33 2.74L2.74 1.33L4.07 2.09L4.09 2.08L4.51 0.6L6.49 0.6L6.91 2.08L6.93 2.09L8.26 1.33L9.67 2.74L8.91 4.07L8.92 4.09ZM5.5 3.35A2.15 2.15 0 1 0 5.5 7.65A2.15 2.15 0 1 0 5.5 3.35Z" fill="#d0d0d0"/></svg>
<span class="t tr lb" style="left:1375.8px;top:559.8px;letter-spacing:-0.01px;font-size:13px;">Texture In</span>
<div class="a" style="left:1586.8px;top:556px;width:246.4px;height:23px;background:#555;border-radius:3px;"></div>
<span class="t ct" style="left:1593.5px;top:559px;color:#ececec;letter-spacing:-0.09px;font-size:12px;">Test Card</span>
<i class="tri" style="left:1817px;top:564.8px;border-width:5px 4.4px 0 4.4px;border-top-color:#f0f0f0"></i>
<span class="t tr lb" style="left:1375.8px;top:588.8px;letter-spacing:-0.48px;font-size:13px;">Style</span>
<div class="a" style="left:1586.8px;top:585px;width:246.4px;height:23px;background:#555;border-radius:2.5px;"></div>
<div class="a" style="left:1586.8px;top:585px;width:123.2px;height:23px;background:#ff7300;border-radius:2.5px 0 0 2.5px;"></div>
<span class="t tc ct" style="left:1548.4px;top:588px;color:#6e2f00;">Static</span>
<span class="t tc ct" style="left:1671.6px;top:588px;">Offset</span>
<span class="t tr lb" style="left:1375.8px;top:617.9px;letter-spacing:-0.08px;font-size:13px;">Strength</span>
<div class="a" style="left:1586.8px;top:614.6px;width:59.9px;height:22px;background:#1f1f1f;border-radius:3px;"></div>
<span class="t ct" style="left:1592.2px;top:617.8px;color:#dedede;letter-spacing:-0.47px;font-size:13px;">0.341667</span>
<div class="a" style="left:1660.1px;top:624.3px;width:7.8px;height:2px;background:#707070;"></div>
<div class="a" style="left:1679.1px;top:624.3px;width:7.8px;height:2px;background:#707070;"></div>
<div class="a" style="left:1682px;top:621.4px;width:2px;height:7.8px;background:#707070;"></div>
<div class="a" style="left:1703.6px;top:623.3px;width:125.1px;height:4px;background:#1c1c1c;border-radius:2px;"></div>
<div class="a" style="left:1703.6px;top:623.3px;width:43.1px;height:4px;background:#5a5a5a;border-radius:2px;"></div>
<div class="a" style="left:1740.5px;top:619.1px;width:12.4px;height:12.4px;background:#8e8e8e;border-radius:50%;"></div>
<span class="t tr lb" style="left:1375.8px;top:646.9px;letter-spacing:-0.13px;font-size:13px;">Mode</span>
<div class="a" style="left:1586.8px;top:643px;width:246.4px;height:23px;background:#555;border-radius:2.5px;"></div>
<div class="a" style="left:1586.8px;top:643px;width:82.2px;height:23px;background:#ff7300;border-radius:2.5px 0 0 2.5px;"></div>
<span class="t tc ct" style="left:1527.9px;top:646px;color:#6e2f00;">Color</span>
<span class="t tc ct" style="left:1610.05px;top:646px;">Grayscale</span>
<span class="t tc ct" style="left:1692.15px;top:646px;">Two-tone</span>
<span class="t tr lb" style="left:1375.8px;top:675.9px;letter-spacing:-0.59px;font-size:13px;">Render Size</span>
<div class="a" style="left:1586.8px;top:672px;width:246.4px;height:23px;background:#555;border-radius:2.5px;"></div>
<div class="a" style="left:1586.8px;top:672px;width:82.2px;height:23px;background:#ff7300;border-radius:2.5px 0 0 2.5px;"></div>
<span class="t tc ct" style="left:1527.9px;top:675px;color:#6e2f00;">1/2</span>
<span class="t tc ct" style="left:1610.05px;top:675px;">1</span>
<span class="t tc ct" style="left:1692.15px;top:675px;">1.5</span>
<div class="a" style="left:1586.8px;top:701px;width:246.4px;height:23px;background:#555;border-radius:2.5px;"></div>
<div class="a" style="left:1586.8px;top:701px;width:246.4px;height:23px;background:#ff7300;border-radius:2.5px;"></div>
<span class="t tc ct" style="left:1610px;top:704px;color:#6e2f00;">Low Pass</span>
<span class="t tr lb" style="left:1375.8px;top:733.9px;letter-spacing:-0.08px;font-size:13px;">Strenght</span>
<div class="a" style="left:1586.8px;top:730.6px;width:59.9px;height:22px;background:#1f1f1f;border-radius:3px;"></div>
<span class="t ct" style="left:1592.2px;top:733.8px;color:#dedede;font-size:13px;">1</span>
<div class="a" style="left:1660.1px;top:740.3px;width:7.8px;height:2px;background:#5c5c5c;"></div>
<div class="a" style="left:1679.1px;top:740.3px;width:7.8px;height:2px;background:#5c5c5c;"></div>
<div class="a" style="left:1682px;top:737.4px;width:2px;height:7.8px;background:#5c5c5c;"></div>
<div class="a" style="left:1703.6px;top:739.3px;width:125.1px;height:4px;background:#1c1c1c;border-radius:2px;"></div>
<div class="a" style="left:1703.6px;top:739.3px;width:122.1px;height:4px;background:#5a5a5a;border-radius:2px;"></div>
<div class="a" style="left:1819.5px;top:735.1px;width:12.4px;height:12.4px;background:#8e8e8e;border-radius:50%;"></div>
<span class="t tr lb" style="left:1375.8px;top:762.9px;letter-spacing:-0.59px;font-size:13px;">Render Size</span>
<div class="a" style="left:1586.8px;top:759px;width:246.4px;height:23px;background:#555;border-radius:2.5px;"></div>
<div class="a" style="left:1586.8px;top:759px;width:82.2px;height:23px;background:#ff7300;border-radius:2.5px 0 0 2.5px;"></div>
<span class="t tc ct" style="left:1527.9px;top:762px;color:#6e2f00;">1/8</span>
<span class="t tc ct" style="left:1610.05px;top:762px;">1/4</span>
<span class="t tc ct" style="left:1692.15px;top:762px;">1/2</span>
<div class="a" style="left:1045px;top:975.6px;width:809px;height:4.4px;background:#1a1a1a;"></div>
</div></body></html>
